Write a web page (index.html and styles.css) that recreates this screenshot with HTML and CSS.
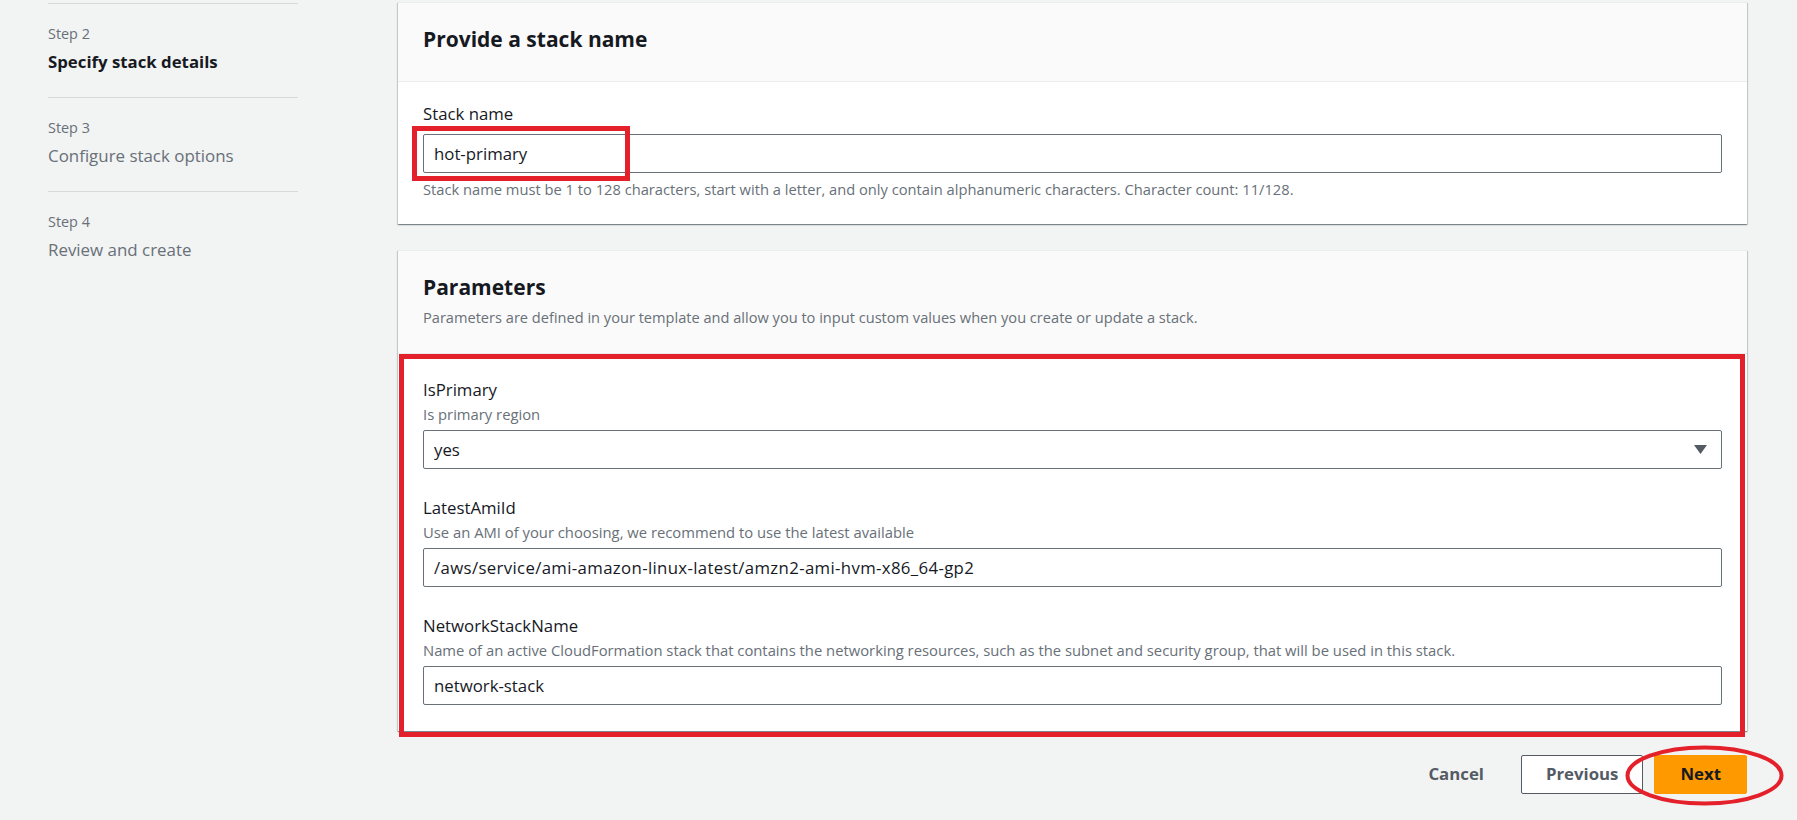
FILE: index.html
```html
<!DOCTYPE html>
<html lang="en">
<head>
<meta charset="utf-8">
<title>Specify stack details</title>
<link rel="stylesheet" href="styles.css">
</head>
<body>
<div class="page">
  <nav class="steps">
    <div class="step">
      <div class="step-num">Step 2</div>
      <div class="step-title active">Specify stack details</div>
    </div>
    <div class="step">
      <div class="step-num">Step 3</div>
      <div class="step-title">Configure stack options</div>
    </div>
    <div class="step">
      <div class="step-num">Step 4</div>
      <div class="step-title">Review and create</div>
    </div>
  </nav>

  <main class="main">
    <section class="card">
      <header class="card-header solo">
        <h2 class="card-title">Provide a stack name</h2>
      </header>
      <div class="card-body">
        <div class="field-label">Stack name</div>
        <div class="control control-first">
          <span>hot-primary</span>
          <div class="mark-rect"></div>
        </div>
        <div class="hint">Stack name must be 1 to 128 characters, start with a letter, and only contain alphanumeric characters. Character count: 11/128.</div>
      </div>
    </section>

    <section class="card">
      <header class="card-header">
        <h2 class="card-title">Parameters</h2>
        <p class="header-desc">Parameters are defined in your template and allow you to input custom values when you create or update a stack.</p>
      </header>
      <div class="card-body params-body">
        <div class="field">
          <div class="field-label">IsPrimary</div>
          <div class="field-desc">Is primary region</div>
          <div class="control">
            <span>yes</span>
            <svg class="caret" width="13" height="9" viewBox="0 0 13 9"><polygon points="0,0 13,0 6.5,9" fill="#545b64"/></svg>
          </div>
        </div>
        <div class="field">
          <div class="field-label">LatestAmiId</div>
          <div class="field-desc">Use an AMI of your choosing, we recommend to use the latest available</div>
          <div class="control"><span class="path-value">/aws/service/ami-amazon-linux-latest/amzn2-ami-hvm-x86_64-gp2</span></div>
        </div>
        <div class="field">
          <div class="field-label">NetworkStackName</div>
          <div class="field-desc">Name of an active CloudFormation stack that contains the networking resources, such as the subnet and security group, that will be used in this stack.</div>
          <div class="control"><span>network-stack</span></div>
        </div>
        <div class="mark-box"></div>
      </div>
    </section>

    <div class="actions">
      <button class="btn btn-link">Cancel</button>
      <button class="btn btn-normal">Previous</button>
      <div class="next-wrap">
        <button class="btn btn-primary">Next</button>
        <svg class="mark-ellipse" width="159" height="61" viewBox="0 0 159 61"><ellipse cx="79.5" cy="30.5" rx="77" ry="28" fill="none" stroke="#e4202a" stroke-width="4"/></svg>
      </div>
    </div>
  </main>
</div>
</body>
</html>
```

FILE: styles.css
```css
html, body {
  margin: 0;
  padding: 0;
}

body {
  background: #f2f3f3;
  font-family: "Open Sans", "Noto Sans", sans-serif;
  color: #16191f;
}

.page {
  display: grid;
  grid-template-columns: 250px 1fr;
  column-gap: 100px;
  padding: 0 50px 0 48px;
  height: 820px;
  overflow: hidden;
}

/* ---------- steps sidebar ---------- */
.steps {
  padding-top: 3px;
}

.step {
  border-top: 1px solid #d5dbdb;
  padding: 20px 0 23px;
}

.step-num {
  font-size: 14.4px;
  line-height: 20px;
  color: #687078;
}

.step-title {
  margin-top: 6px;
  font-size: 16.9px;
  line-height: 24px;
  color: #687078;
}

.step-title.active {
  font-weight: 700;
  color: #16191f;
  font-size: 16.8px;
}

/* ---------- main ---------- */
.main {
  padding-top: 2px;
}

.card {
  background: #fff;
  border-top: 1px solid #eaeded;
  box-shadow: 0 1px 1px 0 rgba(0, 28, 36, 0.3),
              1px 1px 1px 0 rgba(0, 28, 36, 0.15),
              -1px 1px 1px 0 rgba(0, 28, 36, 0.15);
}

.card + .card {
  margin-top: 26px;
}

.card-header {
  background: #fafafa;
  border-bottom: 1px solid #eaeded;
  padding: 22px 25px 26px;
}

.card-header.solo {
  padding-bottom: 28px;
}

.card-title {
  margin: 0;
  font-size: 21px;
  line-height: 28px;
  font-weight: 700;
}

.header-desc {
  margin: 6px 0 0;
  font-size: 14.6px;
  line-height: 20px;
  color: #687078;
}

.card-body {
  position: relative;
  padding: 21px 25px 25px;
}

.params-body {
  padding: 25px 25px 26px;
}

.field + .field {
  margin-top: 28px;
}

.field-label {
  font-size: 16.8px;
  line-height: 22px;
}

.field-desc {
  margin-top: 3px;
  font-size: 14.8px;
  line-height: 20px;
  color: #687078;
}

.control {
  position: relative;
  margin-top: 6px;
  height: 39px;
  box-sizing: border-box;
  border: 1px solid #687078;
  border-radius: 2px;
  padding: 0 10px;
  display: flex;
  align-items: center;
  font-size: 16.8px;
  background: #fff;
}

.path-value {
  letter-spacing: 0.35px;
}

.control-first {
  margin-top: 9px;
}

.caret {
  margin-left: auto;
  margin-right: 4px;
}

.hint {
  margin-top: 6px;
  font-size: 14.7px;
  line-height: 20px;
  color: #687078;
}

/* ---------- annotations ---------- */
.mark-rect {
  position: absolute;
  left: -12px;
  top: -9px;
  width: 218px;
  height: 55px;
  box-sizing: border-box;
  border: 5px solid #e4202a;
  pointer-events: none;
}

.mark-box {
  position: absolute;
  left: 1px;
  top: 0;
  right: 2px;
  bottom: -6px;
  border: 5px solid #e4202a;
  pointer-events: none;
}

/* ---------- actions ---------- */
.actions {
  display: flex;
  justify-content: flex-end;
  align-items: center;
  margin-top: 24px;
}

.btn {
  height: 39px;
  box-sizing: border-box;
  font-family: "Open Sans", "Noto Sans", sans-serif;
  font-size: 16.8px;
  font-weight: 700;
  line-height: 1;
  border-radius: 2px;
  padding: 0 24px;
  border: 1px solid transparent;
  background: none;
  color: #545b64;
  display: inline-flex;
  align-items: center;
}

.btn-normal {
  margin-left: 12px;
  background: #fff;
  border-color: #545b64;
}

.next-wrap {
  position: relative;
  display: flex;
  margin-left: 11px;
}

.btn-primary {
  background: #ff9900;
  border-color: #ff9900;
  color: #16191f;
  padding: 0 25px;
}

.mark-ellipse {
  position: absolute;
  left: -29px;
  top: -10px;
  pointer-events: none;
}
```
